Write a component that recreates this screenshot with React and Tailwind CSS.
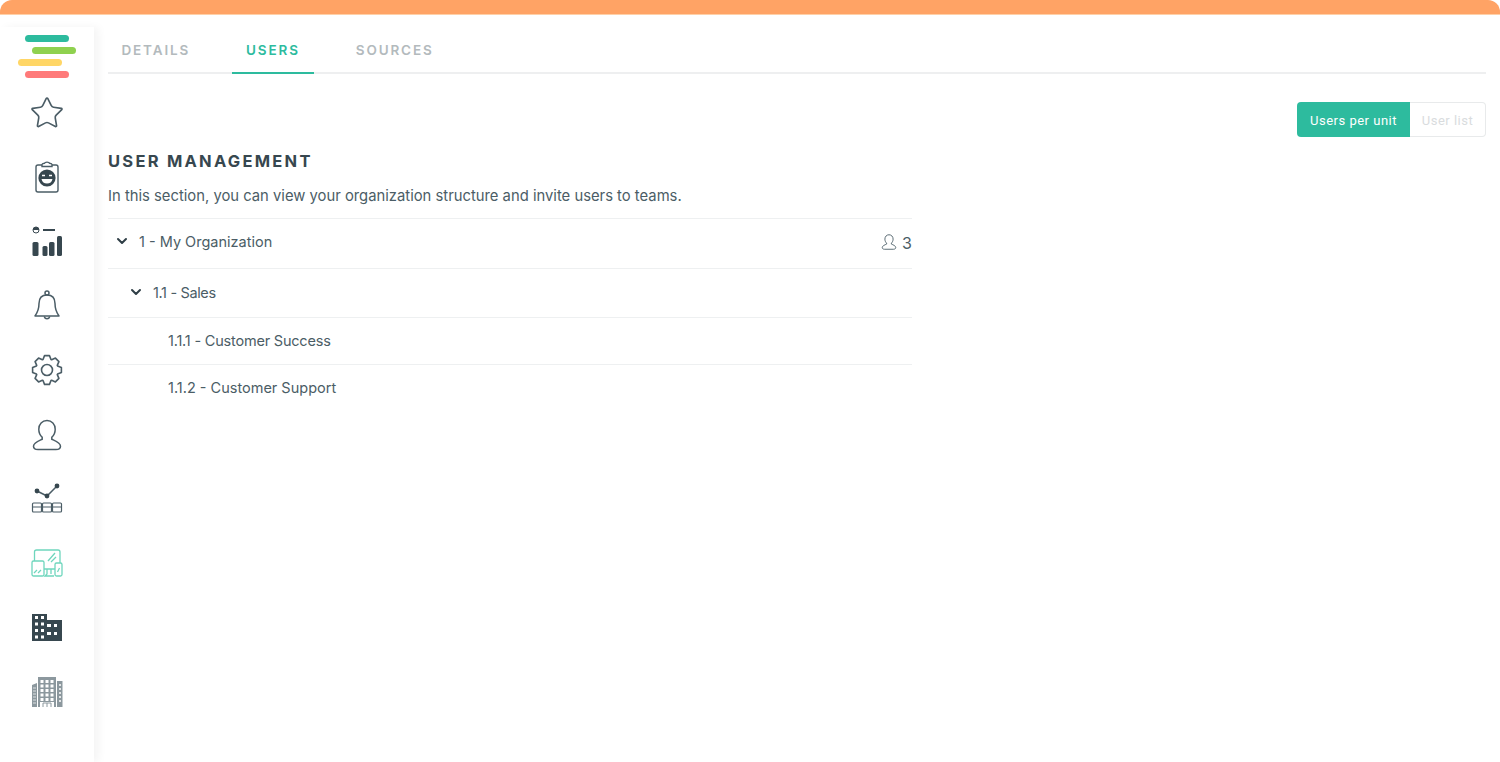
import { ChevronDown, Star } from "lucide-react";

const ink = "#4b5d66";

// 8 toothed gear outline, centred on 16,16
const gearPoints = Array.from({ length: 8 }, (_, i) => {
  const a = (i * Math.PI) / 4;
  return [
    [11.3, a - 0.36],
    [14.6, a - 0.17],
    [14.6, a + 0.17],
    [11.3, a + 0.36],
  ]
    .map(([r, t]) => `${(16 + r * Math.sin(t)).toFixed(2)},${(16 - r * Math.cos(t)).toFixed(2)}`)
    .join(" ");
}).join(" ");

function IconSlot({ children }) {
  return <div className="h-[64.3px] flex items-center justify-center shrink-0">{children}</div>;
}

function ClipboardIcon() {
  return (
    <svg width="32" height="32" viewBox="0 0 32 32" fill="none" stroke={ink} strokeWidth="1.4">
      <rect x="5" y="4" width="22" height="27" rx="2" />
      <path d="M11 5V3.5C11 2.8 12 2.5 13.5 2.2 14 0.8 18 0.8 18.5 2.2 20 2.5 21 2.8 21 3.5V5.5H11Z" fill="#fff" />
      <circle cx="16" cy="17" r="8.6" fill="#37474f" stroke="none" />
      <path d="M11 14.5h3M18 14.5h3" stroke="#fff" strokeWidth="1.3" />
      <path d="M10.5 18h11c-.6 3.2-2.6 4.6-5.5 4.6s-4.9-1.4-5.5-4.6Z" fill="#fff" stroke="none" />
    </svg>
  );
}

function BarsIcon() {
  return (
    <svg width="32" height="32" viewBox="0 0 32 32" fill="#37474f">
      <circle cx="5" cy="4" r="3" fill="none" stroke="#37474f" strokeWidth="1" />
      <path d="M2 4a3 3 0 0 1 6 0Z" />
      <rect x="12" y="3" width="12" height="2" />
      <rect x="1.5" y="16" width="6" height="14" rx="1.5" />
      <rect x="11.5" y="20" width="5" height="10" rx="1.5" />
      <rect x="18" y="16" width="5.5" height="14" rx="1.5" />
      <rect x="26" y="10" width="5" height="20" rx="1.5" />
    </svg>
  );
}

function BellIcon() {
  return (
    <svg width="32" height="32" viewBox="0 0 32 32" fill="none" stroke={ink} strokeWidth="1.5" strokeLinejoin="round">
      <circle cx="16" cy="3" r="2" />
      <path d="M16 5c-5.500 0-8 3.600-8 8.500 0 5.500-1.500 9-4 12.500h24c-2.500-3.500-4-7-4-12.500C24 8.600 21.500 5 16 5Z" />
      <path d="M13.200 26.500a2.900 2.900 0 0 0 5.600 0" />
    </svg>
  );
}

function GearIcon() {
  return (
    <svg width="32" height="32" viewBox="0 0 32 32" fill="none" stroke={ink} strokeWidth="1.6" strokeLinejoin="round">
      <polygon points={gearPoints} />
      <circle cx="16" cy="16" r="5.500" />
    </svg>
  );
}

function UserIcon({ size = 32, width = 1.5 }) {
  return (
    <svg width={size} height={size} viewBox="0 0 32 32" fill="none" stroke={ink} strokeWidth={width}>
      <path d="M16 1.500c-4.800 0-8.200 3.700-8.200 8.700 0 3.200 1.200 6 3.400 8v2c-3.500 1.600-8.700 3.300-8.700 7 0 2.500 2.500 3.300 4.500 3.300h17.900c2 0 4.600-.8 4.600-3.300 0-3.700-5.200-5.400-8.700-7v-2c2.200-2 3.400-4.800 3.400-8 0-5-3.400-8.700-8.200-8.700Z" />
    </svg>
  );
}

function TrendIcon() {
  return (
    <svg width="32" height="32" viewBox="0 0 32 32" fill="none" stroke={ink} strokeWidth="1.200">
      <path d="M6 8l10 5 10-10" strokeWidth="1.500" />
      <circle cx="6" cy="8" r="2.400" fill="#37474f" stroke="none" />
      <circle cx="16" cy="13" r="2.400" fill="#37474f" stroke="none" />
      <circle cx="26" cy="3" r="2.400" fill="#37474f" stroke="none" />
      <rect x="1.500" y="20" width="9" height="9" rx="1" />
      <rect x="11.500" y="20" width="9" height="9" rx="1" />
      <rect x="21.500" y="20" width="9" height="9" rx="1" />
      <path d="M1.500 24h9M11.500 24h9M21.500 24h9" />
    </svg>
  );
}

function DevicesIcon() {
  return (
    <svg width="32" height="32" viewBox="0 -1 32 32" fill="#fff" stroke="#6fd6bd" strokeWidth="1.300">
      <path d="M3.500 13V4c0-1.200.8-2 2-2h21.500c1.200 0 2 .8 2 2v11" />
      <path d="M13 21h11M16 21v5l-2 2h9M20 21v5" />
      <path d="M17 13l7-8M20 14l5-5" />
      <rect x="1" y="13" width="12" height="15" rx="1.500" />
      <path d="M3 25l3-3M7 25l3-3" />
      <rect x="24" y="15" width="7" height="13" rx="1.500" />
      <path d="M26.500 24l2-4" />
    </svg>
  );
}

function OfficeIcon() {
  return (
    <svg width="32" height="32" viewBox="0 0 32 32">
      <path d="M1 2h15v6h15v21H1Z" fill="#37474f" />
      <g fill="#fff">
        <rect x="4" y="4" width="3" height="3" />
        <rect x="10" y="4" width="3" height="3" />
        <rect x="4" y="10.500" width="3" height="3" />
        <rect x="10" y="10.500" width="3" height="3" />
        <rect x="4" y="17" width="3" height="3" />
        <rect x="10" y="17" width="3" height="3" />
        <rect x="4" y="23.500" width="3" height="3" />
        <rect x="10" y="23.500" width="3" height="3" />
        <rect x="16" y="12" width="4" height="3" />
        <rect x="23" y="12" width="3" height="3" />
        <rect x="16" y="20" width="4" height="3" />
        <rect x="23" y="20" width="3" height="3" />
      </g>
    </svg>
  );
}

function TowerIcon() {
  const cells = [];
  for (let r = 0; r < 5; r++) {
    for (let c = 0; c < 3; c++) {
      cells.push(<rect key={`${r}-${c}`} x={9.500 + c * 5} y={4 + r * 4.500} width="3" height="3" fill="#fff" />);
    }
  }
  return (
    <svg width="32" height="32" viewBox="0 0 32 32" fill="#8c989e">
      <path d="M7 1h18v30H7Z" />
      <path d="M1 9l5-2v24H1Z" />
      <path d="M26 5h5.500v26H26Z" />
      {cells}
      <path d="M2 12h3M2 15h3M2 18h3M2 21h3M2 24h3M2 27h3" stroke="#fff" strokeWidth=".7" />
      <path d="M28 9h2M28 13h2M28 17h2M28 21h2M28 25h2" stroke="#fff" strokeWidth="1.500" />
      <rect x="9" y="26" width="14" height="5" fill="#fff" />
      <path d="M12 31v-4h8v4M16 27v4" stroke="#8c989e" strokeWidth="1" fill="none" />
    </svg>
  );
}

function Tab({ label, active }) {
  return (
    <div
      className={`px-[14.500px] h-[40px] pb-[6px] flex items-center text-[13.500px] font-semibold tracking-[1.850px] -mb-[2px] border-b-2 ${
        active ? "text-[#2dbb9e] border-[#2dbb9e]" : "text-[#b3babd] border-transparent"
      }`}
    >
      {label}
    </div>
  );
}

function TreeRow({ label, chevron, indent, height, right, tweak = "" }) {
  return (
    <div className={`flex items-center border-t border-[#eef0f1] text-[14.500px] text-[#4b5d66] ${height} ${indent} ${tweak}`}>
      {chevron && <ChevronDown size={16} strokeWidth={3} className="text-[#2f3e46] mr-[9px] shrink-0 -mt-[3px]" />}
      <span>{label}</span>
      {right}
    </div>
  );
}

export default function App() {
  return (
    <div className="h-[762px] w-[1500px] overflow-hidden bg-white font-['Inter',sans-serif] flex flex-col">
      <div className="h-[15px] shrink-0 bg-[#ffa365] border-b border-[#ffd0a8] rounded-t-[12px]" />
      <div className="flex flex-1 min-h-0 pt-[12px]">
        <aside className="w-[94px] shrink-0 bg-white shadow-[5px_0_8px_rgba(0,0,0,0.045)] flex flex-col pt-[8px]">
          <div className="flex flex-col gap-[5px] mb-[3px]">
            <div className="h-[7px] w-[44px] ml-[25px] rounded-full bg-[#2dbb9e]" />
            <div className="h-[7px] w-[44px] ml-[32px] rounded-full bg-[#8fd14f]" />
            <div className="h-[7px] w-[44px] ml-[18px] rounded-full bg-[#ffd666]" />
            <div className="h-[7px] w-[44px] ml-[25px] rounded-full bg-[#ff7a7a]" />
          </div>
          <IconSlot><Star size={36} strokeWidth={1.100} color={ink} /></IconSlot>
          <IconSlot><ClipboardIcon /></IconSlot>
          <IconSlot><BarsIcon /></IconSlot>
          <IconSlot><BellIcon /></IconSlot>
          <IconSlot><GearIcon /></IconSlot>
          <IconSlot><UserIcon /></IconSlot>
          <IconSlot><TrendIcon /></IconSlot>
          <IconSlot><DevicesIcon /></IconSlot>
          <IconSlot><OfficeIcon /></IconSlot>
          <IconSlot><TowerIcon /></IconSlot>
        </aside>

        <main className="flex-1 pl-[14px] pr-[14px]">
          <div className="border-b-2 border-[#eeeff0] h-[47px] flex items-end">
            <div className="flex gap-[27px] -ml-[1px]">
              <Tab label="DETAILS" />
              <Tab label="USERS" active />
              <Tab label="SOURCES" />
            </div>
          </div>

          <div className="flex justify-end mt-[28px]">
            <div className="h-[35px] w-[113px] pt-[2px] flex items-center justify-center rounded-l-[4px] bg-[#2dbb9e] text-white text-[13px] font-['Roboto',sans-serif] tracking-[0.5px]">
              Users per unit
            </div>
            <div className="h-[35px] w-[76px] pt-[2px] flex items-center justify-center rounded-r-[4px] border border-[#e8eaeb] border-l-0 text-[#d9dcde] text-[13px] font-['Roboto',sans-serif] tracking-[0.5px]">
              User list
            </div>
          </div>

          <h1 className="mt-[14px] text-[16.500px] leading-[20px] font-bold tracking-[2.250px] text-[#37474f]">USER MANAGEMENT</h1>
          <p className="mt-[14px] text-[14.800px] leading-[22px] text-[#4b5d66]">
            In this section, you can view your organization structure and invite users to teams.
          </p>

          <div className="w-[804px] mt-[11px]">
            <TreeRow
              label="1 - My Organization"
              chevron
              indent="pl-[6px]"
              height="h-[50px]"
              tweak="pb-[3px]"
              right={
                <div className="ml-auto flex items-center gap-[5px] text-[16px] text-[#4b5d66]">
                  <UserIcon size={16} width={1.800} />
                  <span className="mt-[2px]">3</span>
                </div>
              }
            />
            <TreeRow label="1.1 - Sales" chevron indent="pl-[20px]" height="h-[49px]" tweak="tracking-[-0.35px]" />
            <TreeRow label="1.1.1 - Customer Success" indent="pl-[60px]" height="h-[47px]" tweak="tracking-[-0.2px]" />
            <TreeRow label="1.1.2 - Customer Support" indent="pl-[60px]" height="h-[47px]" />
          </div>
        </main>
      </div>
    </div>
  );
}
